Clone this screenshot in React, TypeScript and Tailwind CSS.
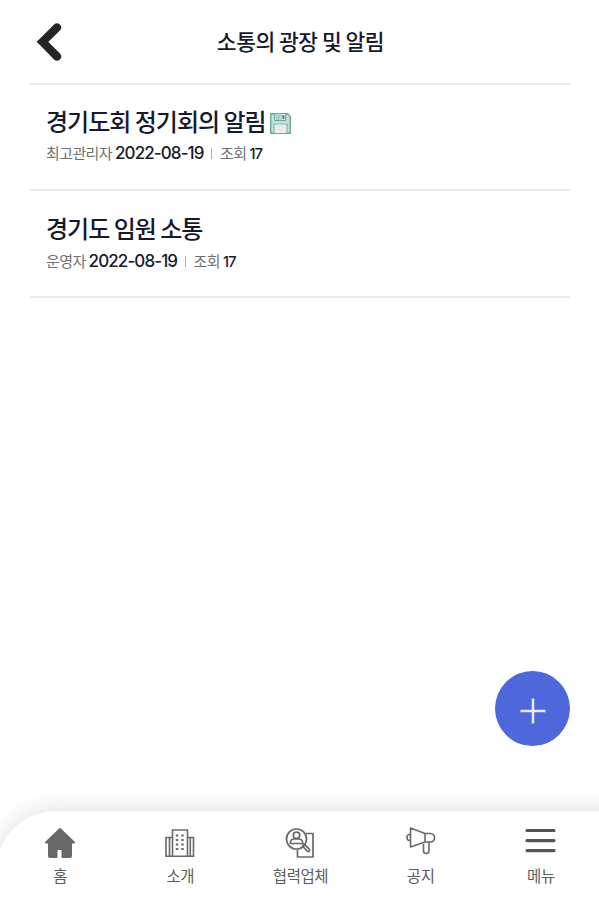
import type { ReactNode } from "react";

const KR = "font-['Noto_Sans_CJK_KR','Noto_Sans',sans-serif]";

type Post = { title: string; author: string; date: string; views: number; attachment?: boolean };

const posts: Post[] = [
  { title: "경기도회 정기회의 알림", author: "최고관리자", date: "2022-08-19", views: 17, attachment: true },
  { title: "경기도 임원 소통", author: "운영자", date: "2022-08-19", views: 17 },
];

function BackIcon() {
  return (
    <svg className="block h-10 w-[26px]" viewBox="0 0 26 40" fill="none" stroke="#242424" strokeWidth="8.2" strokeLinecap="round">
      <path d="M21 5.500 6.500 19.800 21 34.500" strokeLinejoin="miter" />
    </svg>
  );
}

function DiskIcon() {
  return (
    <svg className="block h-[21px] w-[21px]" viewBox="0 0 21 21">
      <path d="M.7.7h16.8l2.8 2.8v16.8H.7z" fill="#bfe3da" stroke="#73a69b" strokeWidth="1.4" />
      <path d="M4.7 1v6.500h11V1" fill="#e0f1ed" stroke="#73a69b" strokeWidth="1.2" />
      <path d="M6 1.400h5.500v5.400H6z" fill="#a4d0c7" />
      <path d="M12.300 2.200h2v3.800h-2z" fill="#537f76" />
      <path d="M4 20V11h13v9" fill="#f0eeea" stroke="#83b5aa" strokeWidth="1.2" />
      <path d="M6 13.700h9M6 16.400h9" stroke="#dfe0dc" />
    </svg>
  );
}

function PostRow({ post }: { post: Post }) {
  return (
    <li className="group h-[107px] border-b-2 border-[#e9e9e9] px-4 pt-[21px] first:h-[106px] first:pt-5">
      <div className="flex h-8 items-center">
        <h2 className="text-[24px] leading-8 font-medium tracking-[-1px] whitespace-nowrap text-[#171a2b]">{post.title}</h2>
        {post.attachment && <span className="mt-[5px] ml-1"><DiskIcon /></span>}
      </div>
      <p className="flex h-8 items-center text-[15px] leading-8 tracking-[-0.600px] whitespace-nowrap text-[#707070] group-last:mt-px">
        <span>{post.author}</span>
        <span className="ml-[3px] w-[89px] font-['Inter','Noto_Sans',sans-serif] text-[17px] font-medium tracking-[-0.900px] text-[#171a2b]">{post.date}</span>
        <span className="mr-2 ml-[7px] h-[11px] w-px bg-[#aaa]" />
        <span>조회</span>
        <span className="mt-0.5 ml-[3px] font-['Inter','Noto_Sans',sans-serif] text-[14.500px] font-medium tracking-[-0.700px] text-[#171a2b]">{post.views}</span>
      </p>
    </li>
  );
}

function HomeIcon() {
  return (
    <svg className="h-8 w-8" viewBox="0 0 32 32" fill="#686868" stroke="#686868" strokeWidth="2" strokeLinejoin="round">
      <path d="M16 2 2 15.500h3V29q0 1 1 1h6.500v-8h6v8H26q1 0 1-1V15.500h3Z" />
    </svg>
  );
}

function BuildingIcon() {
  return (
    <svg className="h-8 w-8" viewBox="0 0 32 32" fill="none" stroke="#696969" strokeWidth="1.600">
      <path d="M8.500 29.200V3h15v26.200M8.500 10.500H2V29.200h27.500V10.500h-6M5.500 11v18M26.300 11v18" />
      <path d="M13 7.500v2M18.500 7.500v2M13 12v2M18.500 12v2M13 16.500v2M18.500 16.500v2M13 21v2M18.500 21v2" strokeWidth="2.400" />
    </svg>
  );
}

function PartnerIcon() {
  return (
    <svg className="h-8 w-8" viewBox="0 0 32 32" fill="none" stroke="#696969" strokeWidth="1.700" strokeLinejoin="round">
      <path d="M22 6.500h7v23.500H13.500v-7" />
      <circle cx="12.500" cy="12" r="10" />
      <circle cx="12.500" cy="8.300" r="3.200" />
      <path d="M6.300 16.500v-1q.5-3.500 4-3.500h4.400q3.500 0 4 3.500v1ZM18.500 19l1.800-1.800 5 5q1 1 0 2t-2 0Z" />
    </svg>
  );
}

function MegaphoneIcon() {
  return (
    <svg className="h-8 w-8" viewBox="0 0 32 32" fill="none" stroke="#696969" strokeWidth="1.600" strokeLinejoin="round">
      <path d="M5.500 1v19L20 15h5.500q4-.600 4-4.300T25.500 6.500H20L5.500 1ZM20 6.500V15M5.500 7.500H4Q2 8 2 10.500T4 13.500h1.500M18.500 15.500v8.500q0 2.500 2.700 2.500t2.800-2.500V15" />
    </svg>
  );
}

function MenuIcon() {
  return (
    <svg className="h-8 w-8" viewBox="0 0 32 32" stroke="#555" strokeWidth="3.200" strokeLinecap="round">
      <path d="M2 3.500h27M2 13.600h27M2 23.600h27" />
    </svg>
  );
}

const tabs: { label: string; icon: ReactNode }[] = [
  { label: "홈", icon: <HomeIcon /> },
  { label: "소개", icon: <BuildingIcon /> },
  { label: "협력업체", icon: <PartnerIcon /> },
  { label: "공지", icon: <MegaphoneIcon /> },
  { label: "메뉴", icon: <MenuIcon /> },
];

export default function App() {
  return (
    <div className={`${KR} flex h-[900px] w-[599px] flex-col overflow-hidden bg-white`}>
      <header className="mr-[29px] ml-[30px] grid h-[85px] shrink-0 grid-cols-[1fr_auto_1fr] items-center border-b-2 border-[#e9e9e9]">
        <button className="ml-1.5 w-fit" aria-label="뒤로"><BackIcon /></button>
        <h1 className="-mt-0.5 ml-px text-[21.500px] leading-8 font-medium tracking-[-0.500px] whitespace-nowrap text-[#171a2b]">소통의 광장 및 알림</h1>
      </header>
      <main className="flex flex-1 flex-col pr-[29px] pl-[30px]">
        <ul>{posts.map((post) => <PostRow key={post.title} post={post} />)}</ul>
        <button className="mt-auto mb-[65px] flex h-[75px] w-[75px] items-center justify-center self-end rounded-full bg-[#4e67db]" aria-label="글쓰기">
          <svg className="mt-1 h-[26px] w-[26px]" viewBox="0 0 26 26" stroke="#e4edff" strokeWidth="2.500"><path d="M13 .5v25M.5 13h25" /></svg>
        </button>
      </main>
      <nav className="-mr-10 -ml-1 h-[89px] shrink-0 rounded-tl-[60px] bg-white pr-[38px] pl-1 shadow-[0_0_26px_rgba(0,0,0,0.14)]">
        <div className="grid grid-cols-5 pt-4">
          {tabs.map((tab) => (
            <button key={tab.label} className="flex flex-col items-center">
              {tab.icon}
              <span className="mt-[3px] text-[15.500px] leading-[26px] tracking-[-0.400px] text-[#5c5c5c]">{tab.label}</span>
            </button>
          ))}
        </div>
      </nav>
    </div>
  );
}
